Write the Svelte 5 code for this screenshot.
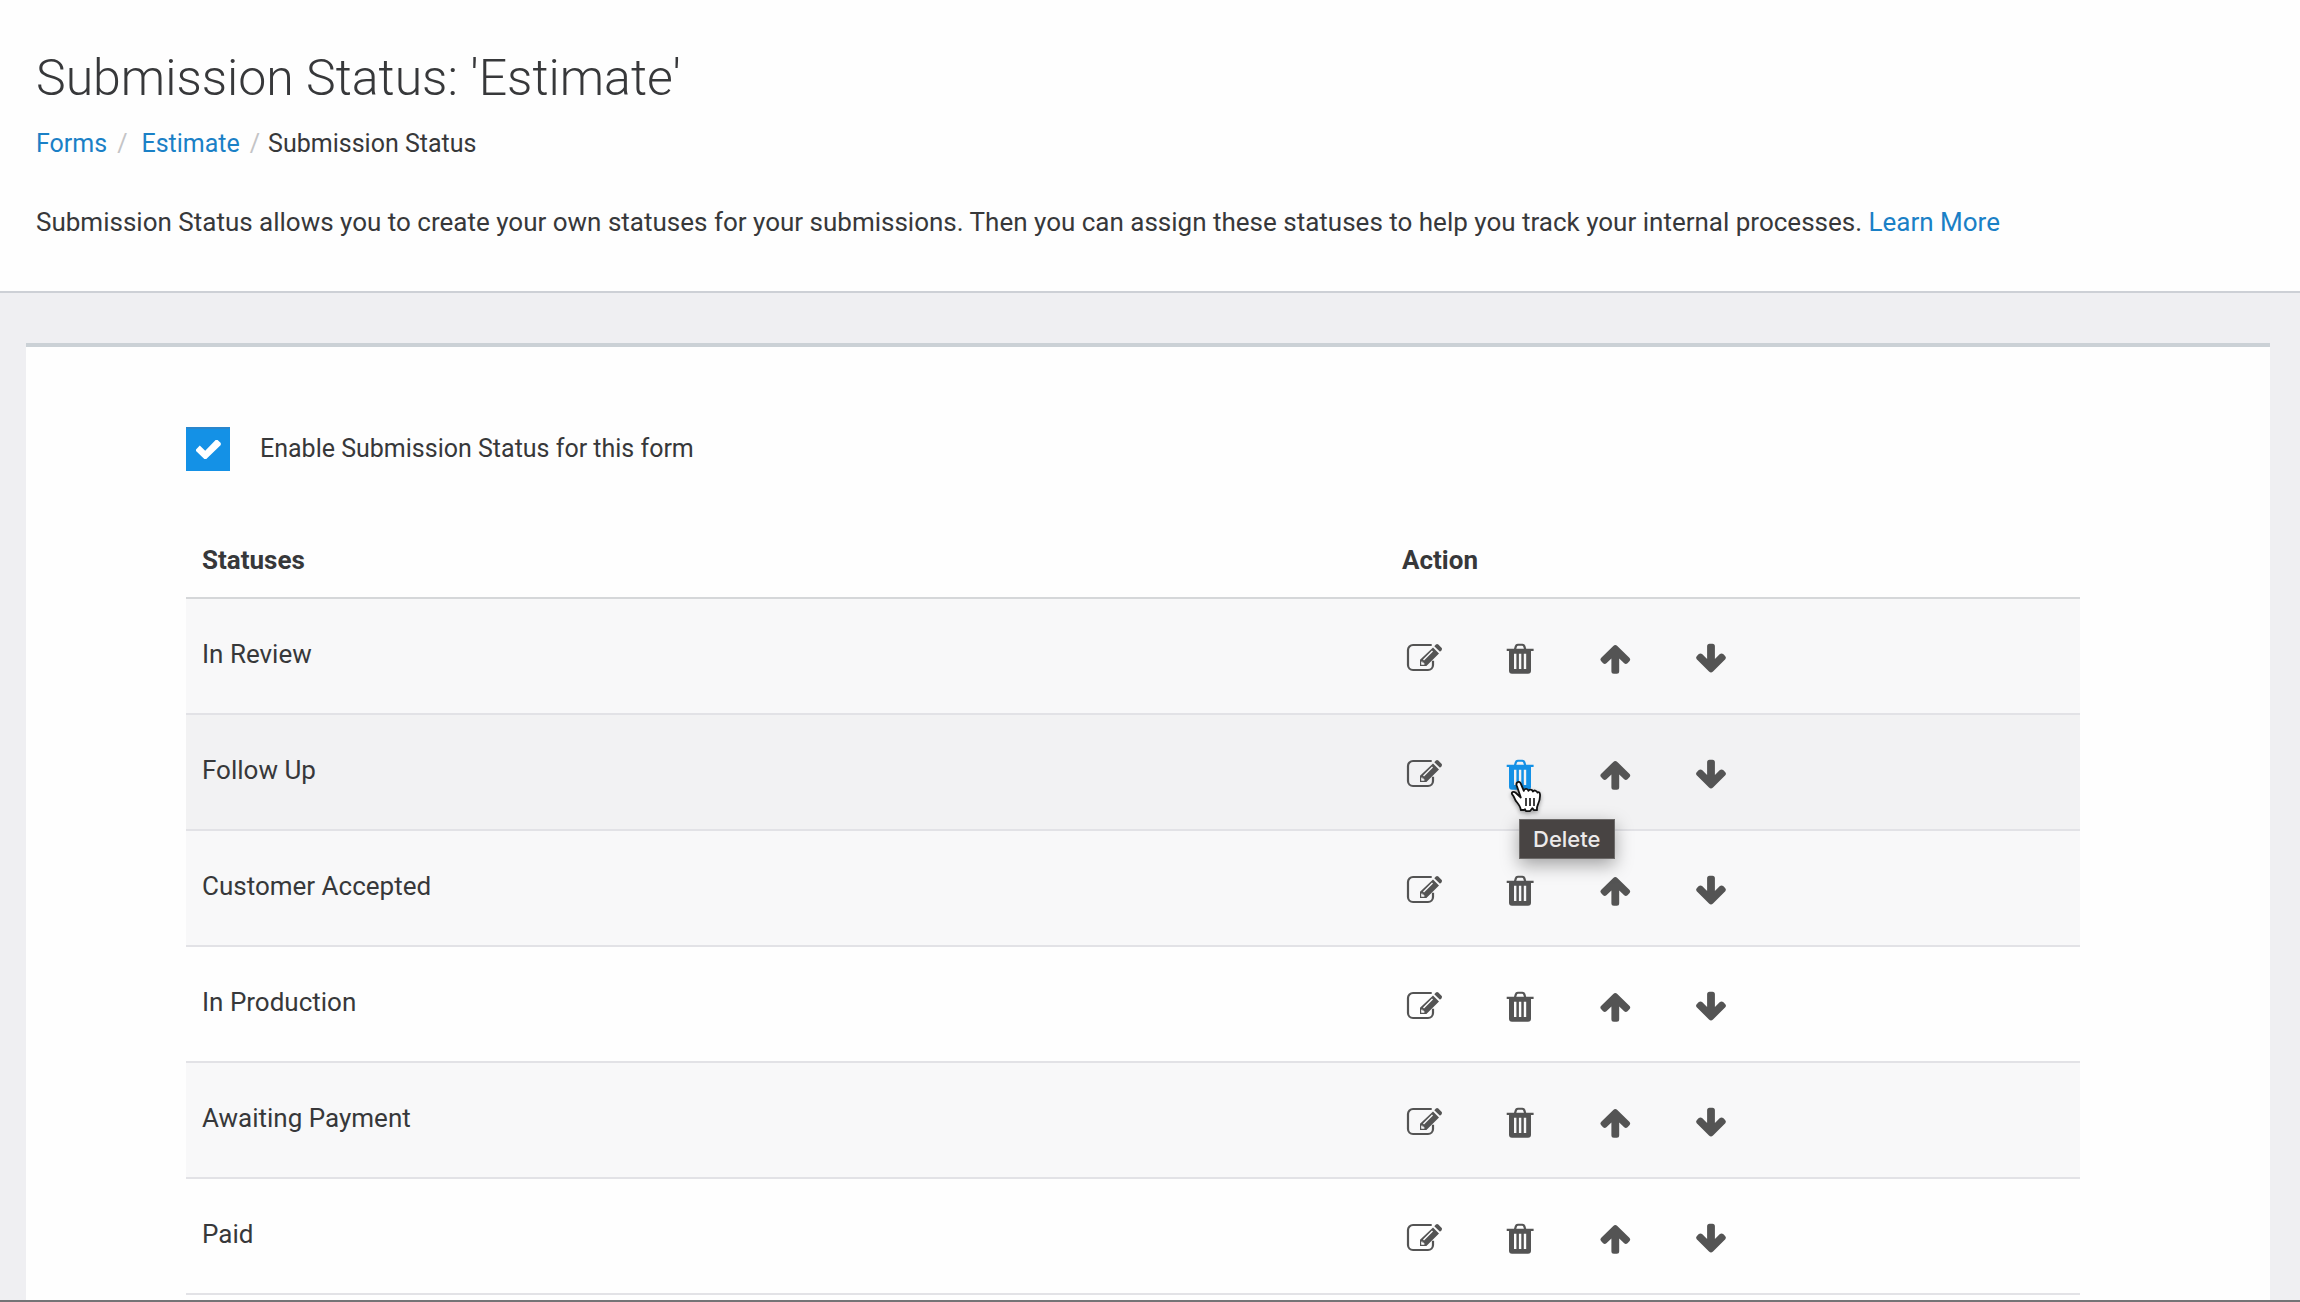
<script>
  let enabled = true;
  const hovered = "Follow Up";
  const statuses = ["In Review", "Follow Up", "Customer Accepted", "In Production", "Awaiting Payment", "Paid"];
</script>

<div class="page">
  <header>
    <h1>Submission Status: 'Estimate'</h1>
    <nav aria-label="Breadcrumb">
      <a href="#forms">Forms</a>
      <span class="slash">/</span>
      <a href="#estimate">Estimate</a>
      <span class="slash last">/</span>
      <span>Submission Status</span>
    </nav>
    <p>
      Submission Status allows you to create your own statuses for your submissions. Then you can assign these statuses
      to help you track your internal processes. <a href="#learn-more">Learn More</a>
    </p>
  </header>

  <main>
    <section class="card">
      <label class="enable">
        <span class="box">
          <input type="checkbox" bind:checked={enabled} />
          {#if enabled}
            <svg viewBox="0 0 44 44">
              <path d="M10 22.5l3.8-4 5.4 5.3 10.4-10.9h2l3.2 3.2v2L20.3 32h-2L10 24z" fill="#fff" />
            </svg>
          {/if}
        </span>
        Enable Submission Status for this form
      </label>

      <table>
        <thead>
          <tr>
            <th class="name">Statuses</th>
            <th>Action</th>
          </tr>
        </thead>
        <tbody>
          {#each statuses as status}
            <tr class:hovered={status === hovered}>
              <td class="name">{status}</td>
              <td>
                <div class="actions">
                  <button aria-label="Edit {status}">
                    <svg viewBox="0 0 36 36">
                      <path
                        d="M25.7 6H7a5 5 0 0 0-5 5v15a5 5 0 0 0 5 5h15a5 5 0 0 0 5-5v-4.3"
                        fill="none"
                        stroke="currentColor"
                        stroke-width="2.2"
                      />
                      <path
                        fill-rule="evenodd"
                        d="M27 8.5l6 6L20.4 27H14v-6.2zM26 11.6l-9 9 1 1 9-9zM16.2 22l-1 1v2.8h2.8l1-1-1.2-.2v-1.2h-1.4z"
                      />
                      <path d="M28.3 7.2l1.6-1.6q1.2-1 2.4 0l3.2 3.2q1 1.2 0 2.4l-1.5 1.6z" />
                    </svg>
                  </button>
                  <button class="delete" aria-label="Delete {status}">
                    <svg viewBox="0 0 36 36">
                      <path
                        fill-rule="evenodd"
                        d="M12 9.7l.8-2.7q.7-2.3 3-2.3h4.6q2.3 0 3 2.3l.8 2.7h7.4V12H29v19.7q0 3-3 3H10q-3 0-3-3V12H4.7V9.7zM14.3 9.7h7.6l-.6-2q-.3-.9-1.3-.9h-3.8q-1 0-1.3.9zM12 14.7V30h2.4V14.7zM16.9 14.7V30h2.4V14.7zM21.8 14.7V30h2.4V14.7z"
                      />
                    </svg>
                    {#if status === hovered}
                      <svg class="cursor" viewBox="0 0 34 36">
                        <path
                          d="M11.8 18.5L7.6 6.2C6.6 3 10.6 1.6 11.8 4.6l3 7.2c.6-2.5 4-2.4 4.6.1.9-2 4-1.6 4.5.7 1-1.8 3.8-1.2 4.5 1 .8-1 2.4-.3 2.6 1.8.3 4-.6 7.2-2.2 10.4-.8 1.7-1 3.3-.8 5.4h-3l-1.7-2-2 2.6c-1.5.4-3.3.4-4.6 0l-.7-1.6-1 .8h-3.2c0-3-2.2-5.6-4.6-8.6-1.4-1.8-1.6-4.2-4-7-1.4-2 1.2-3.4 3.2-1.9z"
                          fill="#fff"
                          stroke="#111"
                          stroke-width="1.8"
                          stroke-linejoin="round"
                        />
                        <path d="M17 19v8M21 19v8M25 19v8" stroke="#111" stroke-width="1.6" />
                      </svg>
                      <span class="tooltip" role="tooltip">Delete</span>
                    {/if}
                  </button>
                  <button aria-label="Move {status} up">
                    <svg viewBox="0 0 36 36">
                      <path
                        d="M15.3 6.9q2-1.8 4 0l12.3 12.2q1.3 1.5 0 3l-2.1 2.2q-1.7 1.3-3.3 0l-5-4.8v12.7q0 2.5-2.5 2.5h-2.8q-2.5 0-2.5-2.5V19.5l-5 4.8q-1.6 1.3-3.3 0L3 22.1q-1.3-1.5 0-3z"
                      />
                    </svg>
                  </button>
                  <button aria-label="Move {status} down">
                    <svg viewBox="0 0 36 36">
                      <path
                        d="M15 32.5q2 1.8 4 0l12.3-12.2q1.3-1.5 0-3l-2.1-2.2q-1.7-1.3-3.3 0l-5 4.8V7.2q0-2.5-2.5-2.5h-2.8q-2.5 0-2.5 2.5v12.7l-5-4.8q-1.6-1.3-3.3 0l-2.1 2.2q-1.3 1.5 0 3z"
                      />
                    </svg>
                  </button>
                </div>
              </td>
            </tr>
          {/each}
        </tbody>
      </table>
    </section>
  </main>
</div>

<style>
  :global(body) {
    background: #efeff2;
  }
  .page {
    display: flex;
    flex-direction: column;
    box-sizing: border-box;
    height: 100vh;
    overflow: hidden;
    border-bottom: 2px solid #747476;
    color: #37383a;
    font-family: Roboto, "Liberation Sans", sans-serif;
    font-size: 26px;
    line-height: 40px;
  }
  header {
    padding: 48px 36px 49px;
    background: #fefefe;
    border-bottom: 2px solid #cdd0d6;
  }
  h1 {
    margin: 0 0 16px;
    font-size: 50px;
    font-weight: 300;
    line-height: 60px;
  }
  nav {
    display: flex;
    margin-bottom: 38px;
    font-size: 25px;
  }
  p {
    margin: 0;
  }
  a {
    color: #1a80c6;
    text-decoration: none;
  }
  .slash {
    padding: 0 14px 0 10px;
    color: #c4c4c6;
  }
  .slash.last {
    padding-right: 8px;
  }
  main {
    flex: 1;
    display: flex;
    padding: 50px 30px 0 26px;
  }
  .card {
    flex: 1;
    padding: 80px 190px 0 160px;
    background: #fefefe;
    border-top: 4px solid #cbd1d6;
  }
  .enable {
    display: flex;
    align-items: center;
    gap: 30px;
    width: fit-content;
    font-size: 25px;
    line-height: 44px;
  }
  .box {
    position: relative;
    width: 44px;
    height: 44px;
  }
  .box input {
    appearance: none;
    display: block;
    width: 44px;
    height: 44px;
    margin: 0;
    border: 1px solid #1491e6;
  }
  .box input:checked {
    background: #1491e6;
    border-top: 2px solid #2a86cc;
  }
  .box svg {
    position: absolute;
    inset: 0;
    pointer-events: none;
  }
  table {
    width: 100%;
    margin-top: 52px;
    border-spacing: 0;
  }
  th {
    height: 74px;
    padding: 0 16px;
    border-bottom: 2px solid #d5d7d9;
    font-weight: 700;
    text-align: left;
  }
  .name {
    width: 63.36%;
    box-sizing: border-box;
  }
  td {
    padding: 40px 20px 38px;
    border-bottom: 2px solid #e2e2e6;
  }
  td.name {
    padding: 35px 16px 39px;
  }
  tbody tr:nth-child(odd) {
    background: #f8f8f9;
  }
  tbody tr.hovered {
    background: #f2f2f3;
  }
  .actions {
    display: flex;
    gap: 60px;
  }
  button {
    position: relative;
    width: 36px;
    height: 36px;
    padding: 0;
    border: 0;
    background: none;
    color: #545454;
    cursor: pointer;
  }
  svg {
    display: block;
    fill: currentColor;
  }
  .hovered .delete {
    color: #1491e6;
  }
  .cursor {
    position: absolute;
    z-index: 2;
    left: 7px;
    top: 24px;
    width: 34px;
    height: 36px;
    filter: drop-shadow(0 2px 2px rgba(0, 0, 0, 0.35));
  }
  .tooltip {
    position: absolute;
    z-index: 1;
    left: 17px;
    top: 64px;
    padding: 0 13px;
    border: 1px solid #6c6a69;
    background: #484443;
    box-shadow: 0 6px 18px rgba(0, 0, 0, 0.35);
    color: #eceaea;
    font: 500 22px/38px Inter, "Liberation Sans", sans-serif;
  }
</style>
